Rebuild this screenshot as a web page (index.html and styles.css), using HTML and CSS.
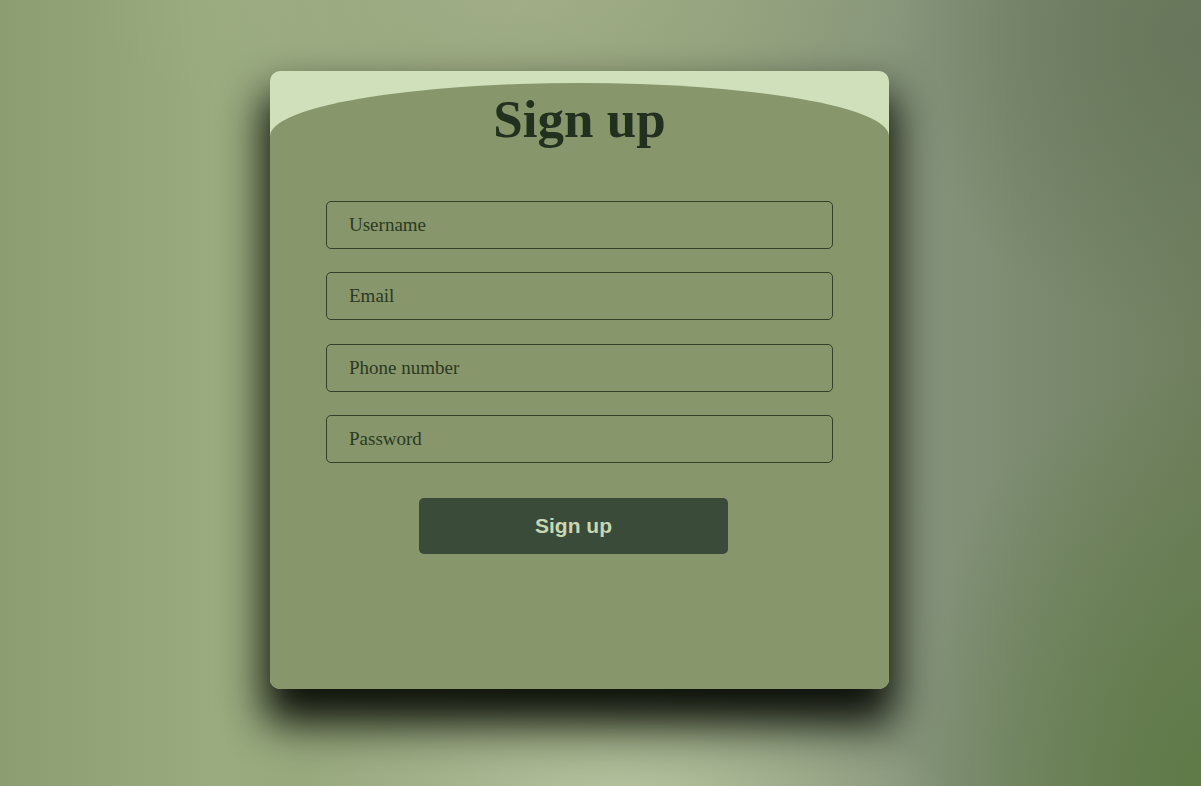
FILE: index.html
```html
<!DOCTYPE html>
<html lang="en">
<head>
<meta charset="utf-8">
<title>Sign up</title>
<link rel="stylesheet" href="styles.css">
</head>
<body>
<main class="page">
  <section class="card">
    <h1 class="card-title">Sign up</h1>
    <form class="form">
      <input class="field" type="text" placeholder="Username">
      <input class="field" type="email" placeholder="Email">
      <input class="field" type="tel" placeholder="Phone number">
      <input class="field" type="password" placeholder="Password">
      <button class="submit" type="button">Sign up</button>
    </form>
  </section>
</main>
</body>
</html>
```

FILE: styles.css
```css
* { box-sizing: border-box; }

html, body {
  margin: 0;
  height: 100%;
}

body {
  overflow: hidden;
  background-color: #8d9c73;
  background-image:
    radial-gradient(ellipse 330px 110px at 620px 800px, #b8c4a2, rgba(184,196,162,0)),
    radial-gradient(ellipse 300px 420px at 1201px 786px, #5f7a47, rgba(95,122,71,0)),
    radial-gradient(ellipse 300px 300px at 1201px 40px, #68775b, rgba(104,119,91,0)),
    radial-gradient(ellipse 420px 160px at 520px 0px, #a0ad86, rgba(160,173,134,0)),
    linear-gradient(90deg, #8d9d72 0%, #9aab7f 18%, #909f77 50%, #84927a 78%, #6f7f5e 100%);
}

.page {
  padding: 71px 0 0 270px;
}

.card {
  position: relative;
  width: 619px;
  height: 618px;
  padding: 22px 56px 0;
  border-radius: 10px;
  overflow: hidden;
  background: #cfe0bb;
  box-shadow: 0 28px 42px 6px rgba(6, 10, 4, 0.95);
}

.card::before {
  content: "";
  position: absolute;
  top: 12px;
  left: 0;
  right: 0;
  bottom: 0;
  background: #87966b;
  border-radius: 50% 50% 0 0 / 53px 53px 0 0;
}

.card-title {
  position: relative;
  margin: 0;
  text-align: center;
  font-family: "Liberation Serif", serif;
  font-weight: 700;
  font-size: 53px;
  line-height: 53px;
  color: #22301f;
}

.form {
  position: relative;
  display: flex;
  flex-direction: column;
  gap: 23.4px;
  margin-top: 55px;
}

.field {
  display: block;
  width: 100%;
  height: 48px;
  margin: 0;
  padding: 0 22px;
  border: 1px solid #33402a;
  border-radius: 5px;
  background: transparent;
  font-family: "Liberation Serif", serif;
  font-size: 19px;
  color: #22301f;
  outline: none;
}

.field::placeholder {
  color: #2b3a22;
  opacity: 1;
}

.submit {
  align-self: center;
  width: 309px;
  height: 56px;
  margin: 11px 0 0 -12px;
  border: none;
  border-radius: 5px;
  background: #3a4b39;
  color: #c7d7b2;
  font-family: "Liberation Sans", Arial, sans-serif;
  font-weight: 700;
  font-size: 21px;
  cursor: pointer;
}
```
